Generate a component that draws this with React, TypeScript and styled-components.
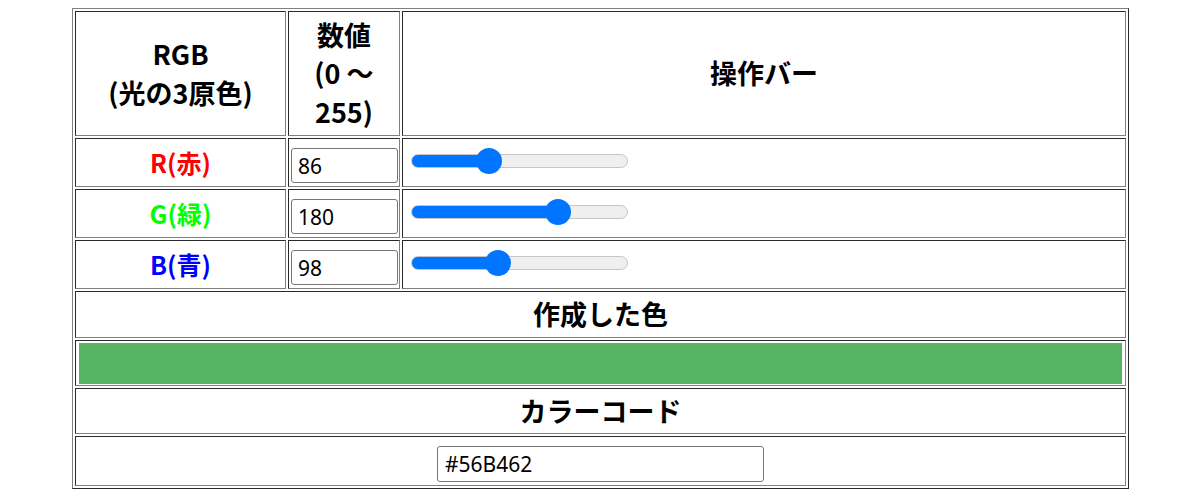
import React, { useState } from "react";
import styled, { createGlobalStyle } from "styled-components";

const GlobalStyle = createGlobalStyle`
  body {
    margin: 8px;
    background: #ffffff;
    font-family: "Noto Sans CJK JP", "Noto Sans", sans-serif;
    font-size: 16px;
    color: #000000;
  }
`;

const DARK = "#2a2a2a";
const GRAY = "#808080";
const BLUE = "#0075ff";

//Outer table, raised border like border="1"
const ColorTable = styled.table`
  width: 1057px;
  margin: 0 0 0 64px;
  table-layout: fixed;
  border-collapse: separate;
  border-spacing: 2px;
  border: 1px solid;
  border-color: ${GRAY} ${DARK} ${DARK} ${GRAY};
`;

//Every cell is sunken
const Cell = styled.td<{ $h: number; $size?: number; $color?: string }>`
  box-sizing: border-box;
  height: ${(props) => props.$h}px;
  padding: 1px;
  border: 1px solid;
  border-color: ${DARK} ${GRAY} ${GRAY} ${DARK};
  text-align: center;
  vertical-align: middle;
  font-weight: 700;
  font-size: ${(props) => props.$size ?? 27}px;
  line-height: 1.42;
  color: ${(props) => props.$color ?? "#000000"};
`;

const SliderCell = styled(Cell)`
  text-align: left;
  line-height: 0;
`;

const ValueInput = styled.input`
  box-sizing: border-box;
  display: block;
  width: 107px;
  height: 35px;
  margin: 6px 0 0 1px;
  padding: 0 6px;
  border: 1px solid #767676;
  border-radius: 3px;
  font-family: "Noto Sans", sans-serif;
  font-size: 21px;
  color: #000000;
  background: #ffffff;
`;

const CodeInput = styled(ValueInput)`
  width: 327px;
  height: 36px;
  margin: 6px auto 0;
  padding: 0 7px;
`;

const Range = styled.input`
  -webkit-appearance: none;
  appearance: none;
  width: 217px;
  height: 26px;
  margin: 0 0 3px 7px;
  background: transparent;
  vertical-align: middle;

  &::-webkit-slider-runnable-track {
    height: 14px;
    box-sizing: border-box;
    border: 1px solid #c6c6c6;
    border-radius: 7px;
    background: var(--fill);
  }
  &::-webkit-slider-thumb {
    -webkit-appearance: none;
    width: 26px;
    height: 26px;
    margin-top: -7px;
    border: none;
    border-radius: 50%;
    background: ${BLUE};
  }
`;

const Swatch = styled.div<{ $bg: string }>`
  height: 41px;
  margin: 0 2px;
  background: ${(props) => props.$bg};
`;

interface ChannelRowProps {
  label: string;
  color: string;
  value: number;
  onChange: (v: number) => void;
}

function ChannelRow(props: ChannelRowProps) {
  // thumb is 26px wide, so the fill ends at its centre
  const pos = 13 + (props.value / 255) * (217 - 26);
  const fill = `linear-gradient(to right, ${BLUE} ${pos}px, #efefef ${pos}px)`;
  return (
    <tr>
      <Cell $h={49} $size={25} $color={props.color}>
        {props.label}
      </Cell>
      <Cell $h={49}>
        <ValueInput
          type="text"
          value={props.value}
          onChange={(e) => {
            const n = Math.max(0, Math.min(255, Number(e.target.value) || 0));
            props.onChange(n);
          }}
        />
      </Cell>
      <SliderCell $h={49}>
        <Range
          type="range"
          min={0}
          max={255}
          value={props.value}
          style={{ ["--fill" as string]: fill }}
          onChange={(e) => props.onChange(Number(e.target.value))}
        />
      </SliderCell>
    </tr>
  );
}

const hex = (n: number) => n.toString(16).padStart(2, "0").toUpperCase();

export default function App() {
  const [r, setR] = useState(86);
  const [g, setG] = useState(180);
  const [b, setB] = useState(98);
  const code = `#${hex(r)}${hex(g)}${hex(b)}`;

  return (
    <>
      <GlobalStyle />
      <ColorTable>
        <colgroup>
          <col style={{ width: 211 }} />
          <col style={{ width: 112 }} />
          <col />
        </colgroup>
        <tbody>
          <tr>
            <Cell as="th" $h={125}>
              RGB
              <br />
              (光の3原色)
            </Cell>
            <Cell as="th" $h={125}>
              数値
              <br />
              (0 ～
              <br />
              255)
            </Cell>
            <Cell as="th" $h={125}>
              操作バー
            </Cell>
          </tr>
          <ChannelRow label="R(赤)" color="#ff0000" value={r} onChange={setR} />
          <ChannelRow label="G(緑)" color="#00ff00" value={g} onChange={setG} />
          <ChannelRow label="B(青)" color="#0000ff" value={b} onChange={setB} />
          <tr>
            <Cell as="th" colSpan={3} $h={47}>
              作成した色
            </Cell>
          </tr>
          <tr>
            <Cell colSpan={3} $h={46}>
              <Swatch $bg={code} />
            </Cell>
          </tr>
          <tr>
            <Cell as="th" colSpan={3} $h={46}>
              カラーコード
            </Cell>
          </tr>
          <tr>
            <Cell colSpan={3} $h={50}>
              <CodeInput type="text" value={code} readOnly />
            </Cell>
          </tr>
        </tbody>
      </ColorTable>
    </>
  );
}
